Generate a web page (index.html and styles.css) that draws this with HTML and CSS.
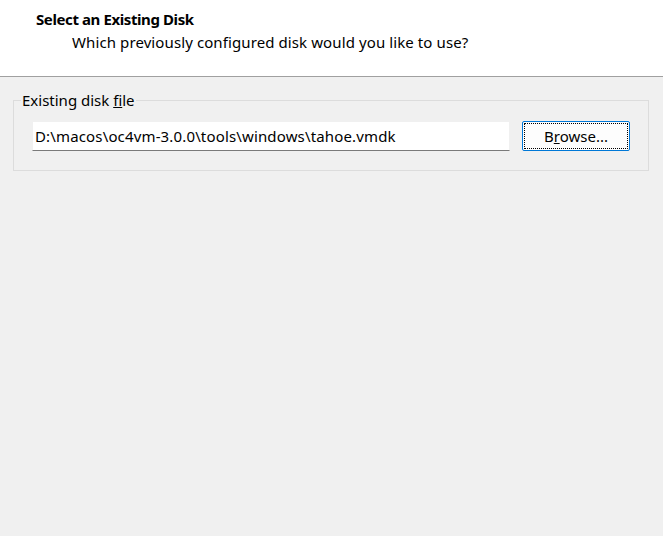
FILE: index.html
```html
<!DOCTYPE html>
<html lang="en">
<head>
  <meta charset="UTF-8">
  <title>Select an Existing Disk</title>
  <link rel="stylesheet" href="styles.css">
</head>
<body>
  <div class="header">
    <h1>Select an Existing Disk</h1>
    <p>Which previously configured disk would you like to use?</p>
  </div>

  <div class="content">
    <fieldset class="group">
      <legend>Existing disk <u>f</u>ile</legend>
      <div class="row">
        <input type="text" class="path" value="D:\macos\oc4vm-3.0.0\tools\windows\tahoe.vmdk">
        <button type="button" class="browse"><span>B<u>r</u>owse...</span></button>
      </div>
    </fieldset>
  </div>
</body>
</html>
```

FILE: styles.css
```css
html, body {
  margin: 0;
  height: 100%;
}
body {
  font-family: "Noto Sans", "Open Sans", sans-serif;
  font-size: 15px;
  color: #000;
  background-color: #f0f0f0;
}
.header {
  background-color: #fff;
  height: 76px;
  border-bottom: 1px solid #a0a0a0;
  box-sizing: content-box;
}
.header h1 {
  margin: 0;
  padding: 8px 0 0 36px;
  font-size: 15px;
  font-weight: bold;
  line-height: 22px;
  letter-spacing: -0.4px;
}
.header p {
  margin: 0;
  padding: 1px 0 0 72px;
  line-height: 22px;
  letter-spacing: 0.1px;
}
.content {
  padding: 15px 13px 0 13px;
}
.group {
  margin: 0;
  width: 636px;
  height: 79px;
  box-sizing: border-box;
  border: 1px solid #dcdcdc;
  padding: 0 18px 0 18px;
}
.group legend {
  padding: 0 1px;
  margin-left: -11px;
  line-height: 16px;
}
.row {
  display: flex;
  align-items: center;
  gap: 12px;
  margin-top: 13px;
}
.path {
  width: 478px;
  height: 30px;
  box-sizing: border-box;
  margin: 0;
  padding: 0 2px;
  font: inherit;
  letter-spacing: 0.15px;
  background: #fff;
  border: 1px solid #f0f0f0;
  border-bottom: 1px solid #7a7a7a;
  outline: none;
}
.browse {
  width: 108px;
  height: 30px;
  margin: 0;
  padding: 1px;
  font: inherit;
  background: #fdfdfd;
  border: 1px solid #0078d7;
  border-radius: 2px;
  box-sizing: border-box;
}
.browse span {
  display: block;
  height: 100%;
  box-sizing: border-box;
  border: 1px dotted #000;
  line-height: 24px;
}
```
